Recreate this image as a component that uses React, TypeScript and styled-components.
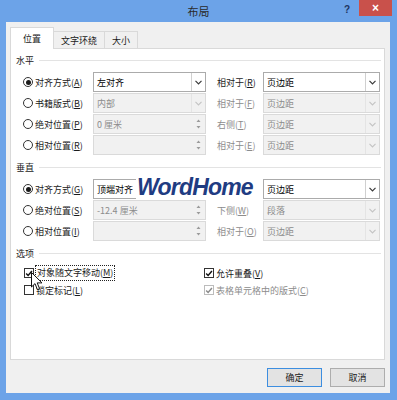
import React from 'react';
import styled, { createGlobalStyle } from 'styled-components';

const GlobalStyle = createGlobalStyle`
  html, body {
    margin: 0;
    padding: 0;
    background: #6ca3e8;
  }
  body {
    font-family: "Noto Sans CJK SC", "Noto Sans", sans-serif;
    font-size: 9px;
    color: #1a1a1a;
  }
`;

type FieldSpec = {
  text: string;
  kind: 'select' | 'spin';
  disabled?: boolean;
};

type RowSpec = {
  label: string;
  key: string;
  checked?: boolean;
  left: FieldSpec;
  rightLabel?: string;
  rightKey?: string;
  right: FieldSpec;
};

const horizontalRows: RowSpec[] = [
  { label: '对齐方式', key: 'A', checked: true, left: { text: '左对齐', kind: 'select' }, rightLabel: '相对于', rightKey: 'R', right: { text: '页边距', kind: 'select' } },
  { label: '书籍版式', key: 'B', left: { text: '内部', kind: 'select', disabled: true }, rightLabel: '相对于', rightKey: 'F', right: { text: '页边距', kind: 'select', disabled: true } },
  { label: '绝对位置', key: 'P', left: { text: '0 厘米', kind: 'spin', disabled: true }, rightLabel: '右侧', rightKey: 'T', right: { text: '页边距', kind: 'select', disabled: true } },
  { label: '相对位置', key: 'R', left: { text: '', kind: 'spin', disabled: true }, rightLabel: '相对于', rightKey: 'E', right: { text: '页边距', kind: 'select', disabled: true } },
];

// the watermark hides the label of the first vertical row
const verticalRows: RowSpec[] = [
  { label: '对齐方式', key: 'G', checked: true, left: { text: '顶端对齐', kind: 'select' }, right: { text: '页边距', kind: 'select' } },
  { label: '绝对位置', key: 'S', left: { text: '-12.4 厘米', kind: 'spin', disabled: true }, rightLabel: '下侧', rightKey: 'W', right: { text: '段落', kind: 'select', disabled: true } },
  { label: '相对位置', key: 'I', left: { text: '', kind: 'spin', disabled: true }, rightLabel: '相对于', rightKey: 'O', right: { text: '页边距', kind: 'select', disabled: true } },
];

function Chevron({ disabled }: { disabled?: boolean }) {
  return (
    <svg width="7" height="5" viewBox="0 0 7 5">
      <path d="M0.5 0.8 L3.5 3.8 L6.5 0.8" fill="none" stroke={disabled ? '#c4c4c4' : '#3a3a3a'} strokeWidth="1.2" />
    </svg>
  );
}

function SpinArrows({ disabled }: { disabled?: boolean }) {
  const c = disabled ? '#9a9a9a' : '#333';
  return (
    <svg width="5" height="12" viewBox="0 0 5 12">
      <path d="M0.5 4 L2.5 1.5 L4.5 4 Z" fill={c} />
      <path d="M0.5 8 L2.5 10.5 L4.5 8 Z" fill={c} />
    </svg>
  );
}

function Field({ spec }: { spec: FieldSpec }) {
  return (
    <FieldBox $disabled={spec.disabled}>
      <FieldText>{spec.text}</FieldText>
      {spec.kind === 'select' ? (
        <ArrowBox $disabled={spec.disabled} $divider>
          <Chevron disabled={spec.disabled} />
        </ArrowBox>
      ) : (
        <ArrowBox $disabled={spec.disabled}>
          <SpinArrows disabled={spec.disabled} />
        </ArrowBox>
      )}
    </FieldBox>
  );
}

function PositionRow({ row }: { row: RowSpec }) {
  return (
    <Row>
      <Radio $checked={row.checked} />
      <Label>
        {row.label}(<u>{row.key}</u>)
      </Label>
      <Field spec={row.left} />
      <span />
      <Label $disabled={row.right.disabled}>
        {row.rightLabel && (
          <>
            {row.rightLabel}(<u>{row.rightKey}</u>)
          </>
        )}
      </Label>
      <Field spec={row.right} />
    </Row>
  );
}

function CheckMark({ disabled }: { disabled?: boolean }) {
  return (
    <svg width="9" height="9" viewBox="0 0 9 9">
      <path d="M1.3 4.6 L3.5 6.8 L7.8 1.6" fill="none" stroke={disabled ? '#8a8a8a' : '#111'} strokeWidth="1.6" />
    </svg>
  );
}

function Cursor() {
  return (
    <CursorWrap>
      <svg width="12" height="19" viewBox="0 0 12 19">
        <path d="M0.5 0.5 L0.5 15 L4 11.6 L6.4 17.6 L8.6 16.7 L6.2 10.9 L11 10.9 Z" fill="#fff" stroke="#111" strokeWidth="1" strokeLinejoin="round" />
      </svg>
    </CursorWrap>
  );
}

export default function App() {
  return (
    <>
      <GlobalStyle />
      <Window>
        <TitleBar>
          <span />
          <Title>布局</Title>
          <Caption>
            <Help>?</Help>
            <Close>×</Close>
          </Caption>
        </TitleBar>
        <Client>
          <TabStrip>
            <Tab $active>位置</Tab>
            <Tab>文字环绕</Tab>
            <Tab>大小</Tab>
          </TabStrip>
          <Panel>
            <SectionHeader>
              <span>水平</span>
              <Rule />
            </SectionHeader>
            <Rows>
              {horizontalRows.map((r) => (
                <PositionRow key={r.label + r.key} row={r} />
              ))}
            </Rows>
            <SectionHeader $gap>
              <span>垂直</span>
              <Rule />
            </SectionHeader>
            <Rows>
              {verticalRows.map((r) => (
                <PositionRow key={r.label + r.key} row={r} />
              ))}
            </Rows>
            <SectionHeader $gap>
              <span>选项</span>
              <Rule />
            </SectionHeader>
            <Options>
              <Check>
                <Box>
                  <CheckMark />
                </Box>
                <Focused>
                  对象随文字移动(<u>M</u>)
                </Focused>
              </Check>
              <Check>
                <Box>
                  <CheckMark />
                </Box>
                <span>
                  允许重叠(<u>V</u>)
                </span>
              </Check>
              <Check>
                <Box />
                <span>
                  锁定标记(<u>L</u>)
                </span>
              </Check>
              <Check $disabled>
                <Box $disabled>
                  <CheckMark disabled />
                </Box>
                <span>
                  表格单元格中的版式(<u>C</u>)
                </span>
              </Check>
            </Options>
          </Panel>
          <Footer>
            <Button $default>确定</Button>
            <Button>取消</Button>
          </Footer>
        </Client>
        <Watermark>WordHome</Watermark>
        <Cursor />
      </Window>
    </>
  );
}

const Window = styled.div`
  position: relative;
  width: 397px;
  height: 400px;
  background: #6ca3e8;
  display: flex;
  flex-direction: column;
  overflow: hidden;
`;

const TitleBar = styled.div`
  height: 22px;
  display: grid;
  grid-template-columns: 1fr auto 1fr;
  align-items: center;
`;

const Title = styled.span`
  font-size: 11px;
  color: #2a2a2a;
`;

const Caption = styled.div`
  justify-self: end;
  align-self: start;
  display: flex;
  align-items: flex-start;
  margin-right: 5px;
`;

const Help = styled.span`
  font-family: "Liberation Sans", sans-serif;
  font-weight: bold;
  font-size: 10px;
  color: #1e3560;
  margin-top: 4px;
  margin-right: 9px;
`;

const Close = styled.span`
  width: 33px;
  height: 16px;
  background: #c9514b;
  color: #fff;
  font-family: "Liberation Sans", sans-serif;
  font-size: 12px;
  font-weight: bold;
  display: flex;
  align-items: center;
  justify-content: center;
`;

const Client = styled.div`
  flex: 1;
  margin: 0 7px 7px 6px;
  background: #f0f0f0;
  padding: 5px 5px 0 4px;
  display: flex;
  flex-direction: column;
`;

const TabStrip = styled.div`
  display: flex;
  align-items: flex-end;
  height: 22px;
  margin-bottom: -1px;
  position: relative;
  z-index: 1;
`;

const Tab = styled.div<{ $active?: boolean }>`
  box-sizing: border-box;
  height: ${(p) => (p.$active ? '22px' : '18px')};
  padding: 0 ${(p) => (p.$active ? '12px' : '7px')};
  margin-left: ${(p) => (p.$active ? '0' : '-1px')};
  border: 1px solid #d9d9d9;
  border-bottom: ${(p) => (p.$active ? 'none' : '1px solid #d9d9d9')};
  background: ${(p) => (p.$active ? '#fff' : '#f0f0f0')};
  display: flex;
  align-items: center;
  color: #1a1a1a;
  &:first-child {
    margin-left: 0;
  }
`;

const Panel = styled.div`
  box-sizing: border-box;
  height: 312px;
  background: #fff;
  border: 1px solid #d9d9d9;
  padding: 1px 3px 0 5px;
`;

const SectionHeader = styled.div<{ $gap?: boolean }>`
  height: 21px;
  margin-top: ${(p) => (p.$gap ? '2px' : '0')};
  margin-bottom: 1px;
  display: flex;
  align-items: center;
  gap: 5px;
`;

const Rule = styled.div`
  flex: 1;
  height: 1px;
  background: #e3e3e3;
`;

const Rows = styled.div`
  display: flex;
  flex-direction: column;
  gap: 1px;
`;

const Row = styled.div`
  display: grid;
  grid-template-columns: 12px 58px 113px 11px 46px 117px;
  align-items: center;
  height: 20px;
  margin-left: 7px;
`;

const Radio = styled.span<{ $checked?: boolean }>`
  box-sizing: border-box;
  width: 10px;
  height: 10px;
  border-radius: 50%;
  border: 1px solid #333;
  background: #fff;
  display: flex;
  align-items: center;
  justify-content: center;
  &::after {
    content: '';
    width: 5px;
    height: 5px;
    border-radius: 50%;
    background: ${(p) => (p.$checked ? '#1a1a1a' : 'transparent')};
  }
`;

const Label = styled.span<{ $disabled?: boolean }>`
  white-space: nowrap;
  color: ${(p) => (p.$disabled ? '#8c8c8c' : '#1a1a1a')};
`;

const FieldBox = styled.div<{ $disabled?: boolean }>`
  box-sizing: border-box;
  height: 20px;
  border: 1px solid ${(p) => (p.$disabled ? '#dadada' : '#ababab')};
  background: ${(p) => (p.$disabled ? '#f1f1f1' : '#fff')};
  color: ${(p) => (p.$disabled ? '#8c8c8c' : '#000')};
  display: flex;
  align-items: center;
`;

const FieldText = styled.span`
  flex: 1;
  padding-left: 3px;
  white-space: nowrap;
`;

const ArrowBox = styled.span<{ $disabled?: boolean; $divider?: boolean }>`
  width: 13px;
  height: 100%;
  display: flex;
  align-items: center;
  justify-content: center;
  border-left: 1px solid
    ${(p) => (p.$divider ? (p.$disabled ? '#e4e4e4' : '#d0d0d0') : 'transparent')};
`;

const Options = styled.div`
  display: grid;
  grid-template-columns: 180px 1fr;
  row-gap: 1px;
  margin-left: 8px;
`;

const Check = styled.div<{ $disabled?: boolean }>`
  height: 16px;
  display: flex;
  align-items: center;
  gap: 2px;
  color: ${(p) => (p.$disabled ? '#8c8c8c' : '#1a1a1a')};
`;

const Box = styled.span<{ $disabled?: boolean }>`
  box-sizing: border-box;
  width: 10px;
  height: 10px;
  border: 1px solid ${(p) => (p.$disabled ? '#bcbcbc' : '#333')};
  background: #fff;
  display: flex;
  align-items: center;
  justify-content: center;
`;

const Focused = styled.span`
  outline: 1px dotted #222;
  padding: 0 1px;
  line-height: 14px;
`;

const Footer = styled.div`
  display: flex;
  justify-content: flex-end;
  gap: 8px;
  margin-top: 8px;
`;

const Button = styled.div<{ $default?: boolean }>`
  box-sizing: border-box;
  width: 55px;
  height: 19px;
  border: 1px solid ${(p) => (p.$default ? '#3d8ee0' : '#adadad')};
  background: #e3e3e3;
  display: flex;
  align-items: center;
  justify-content: center;
  color: #1a1a1a;
`;

const Watermark = styled.div`
  position: absolute;
  left: 136px;
  top: 176px;
  height: 23px;
  line-height: 23px;
  padding: 0 8px 0 1px;
  background: #fff;
  font-family: "Liberation Sans", Arial, sans-serif;
  font-weight: bold;
  font-style: italic;
  font-size: 23px;
  letter-spacing: -0.8px;
  color: #1f3c82;
`;

const CursorWrap = styled.div`
  position: absolute;
  left: 31px;
  top: 272px;
  line-height: 0;
`;
